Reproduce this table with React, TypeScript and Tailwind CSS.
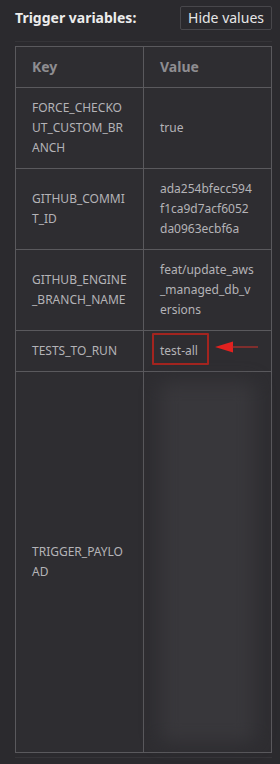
import React from "react";

type Row = {
  name: string;
  value: React.ReactNode;
};

const ArrowMark = () => (
  <svg
    className="absolute left-[54px] top-[0px]"
    width="46"
    height="12"
    viewBox="0 0 46 12"
  >
    <polygon points="1,6 19,0.5 19,11.5" fill="#e3211f" />
    <line x1="18" y1="6" x2="44" y2="6" stroke="#b8302c" strokeWidth="1.2" />
  </svg>
);

const rows: Row[] = [
  { name: "FORCE_CHECKOUT_CUSTOM_BRANCH", value: "true" },
  { name: "GITHUB_COMMIT_ID", value: "ada254bfecc594f1ca9d7acf6052da0963ecbf6a" },
  { name: "GITHUB_ENGINE_BRANCH_NAME", value: "feat/update_aws_managed_db_versions" },
  {
    name: "TESTS_TO_RUN",
    value: (
      <span className="relative inline-block">
        test-all
        <span className="absolute left-[-8px] top-[-8px] w-[57px] h-[32px] border-2 border-[#a3241f] rounded-[1px]" />
        <ArrowMark />
      </span>
    ),
  },
  {
    name: "TRIGGER_PAYLOAD",
    value: (
      <div className="h-[360px] flex items-stretch justify-center">
        <div className="w-[104px] bg-[#38373b] blur-[9px] rounded-lg" />
      </div>
    ),
  },
];

const App = () => {
  return (
    <div
      className="w-[280px] h-[764px] bg-[#2b2a2e] overflow-hidden"
      style={{ fontFamily: '"Noto Sans", "Open Sans", sans-serif' }}
    >
      <div className="flex items-center justify-between pl-[15px] pr-[8px] pt-[6px]">
        <p className="text-sm font-bold text-[#ececec]">Trigger variables:</p>
        <button className="h-[24px] w-[92px] border border-[#48474b] bg-[#2a292d] text-sm text-[#e6e6e6] rounded-[2px]">
          Hide values
        </button>
      </div>
      <div className="mx-[15px] mt-[11px] w-[257px] border-y border-[#353438] py-[4px]">
        <table className="w-full table-fixed border-collapse border border-[#5a595d] bg-[#2e2d31]">
          <thead>
            <tr>
              <th className="w-1/2 border border-[#5a595d] px-4 py-[10px] text-left text-sm leading-5 font-bold text-[#8e8d91]">
                Key
              </th>
              <th className="w-1/2 border border-[#5a595d] px-4 py-[10px] text-left text-sm leading-5 font-bold text-[#8e8d91]">
                Value
              </th>
            </tr>
          </thead>
          <tbody>
            {rows.map((row) => (
              <tr key={row.name}>
                <td className="border border-[#5a595d] px-4 py-[10px] text-xs leading-5 text-[#b4b3b7] break-all align-middle">
                  {row.name}
                </td>
                <td className="border border-[#5a595d] px-4 py-[10px] text-xs leading-5 text-[#b4b3b7] break-all align-middle">
                  {row.value}
                </td>
              </tr>
            ))}
          </tbody>
        </table>
      </div>
    </div>
  );
};

export default App;
